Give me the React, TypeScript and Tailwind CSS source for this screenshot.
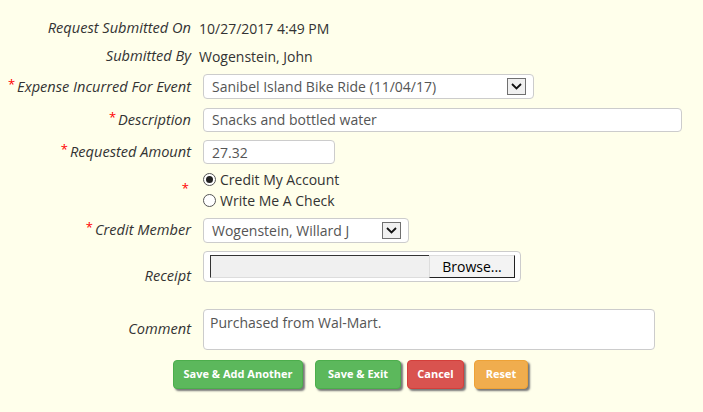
import React from "react";

const font = { fontFamily: '"Open Sans", "Noto Sans", sans-serif' };

function Label({ children, req }: { children?: React.ReactNode; req?: boolean }) {
  return (
    <div className="flex items-center justify-end pr-[8px] italic text-[14.6px] text-[#333]">
      {req && <span className="text-[#f00] not-italic mr-[2px] text-[13px] relative top-[-2px]">*</span>}
      {children}
    </div>
  );
}

function Chevron() {
  return (
    <div className="w-[19px] h-[17px] border border-[#707070] bg-[#f0f0f0] flex items-center justify-center">
      <svg width="11" height="7" viewBox="0 0 11 7">
        <path d="M1 1 L5.5 5.5 L10 1" fill="none" stroke="#111" strokeWidth="1.8" />
      </svg>
    </div>
  );
}

function Radio({ checked }: { checked?: boolean }) {
  return (
    <div className="w-[13px] h-[13px] rounded-full border border-[#555] bg-white flex items-center justify-center">
      {checked && <div className="w-[7px] h-[7px] rounded-full bg-[#222]" />}
    </div>
  );
}

function Btn({ children, cls }: { children: React.ReactNode; cls: string }) {
  return (
    <button
      className={`h-[29px] rounded-[4px] border text-white font-bold text-[11px] shadow-[2px_2px_2px_#777] ${cls}`}
    >
      {children}
    </button>
  );
}

export default function App() {
  return (
    <div className="w-[703px] h-[412px] bg-[#ffffeb] text-[14px] text-[#333]" style={font}>
      <div className="grid grid-cols-[199px_1fr] pt-[14px]">
        <Label>Request Submitted On</Label>
        <div className="h-[28px] flex items-center">10/27/2017 4:49 PM</div>

        <Label>Submitted By</Label>
        <div className="h-[28px] flex items-center">Wogenstein, John</div>

        <Label req>Expense Incurred For Event</Label>
        <div className="h-[33px] flex items-center pl-[4px]">
          <div className="w-[331px] h-[25px] rounded-[4px] border border-[#ccc] bg-white flex items-center justify-between pl-[8px] pr-[7px] text-[#555]">
            <span>Sanibel Island Bike Ride (11/04/17)</span>
            <Chevron />
          </div>
        </div>

        <Label req>Description</Label>
        <div className="h-[33px] flex items-center pl-[4px]">
          <div className="w-[479px] h-[24px] rounded-[4px] border border-[#ccc] bg-white flex items-center pl-[8px] text-[#555]">
            Snacks and bottled water
          </div>
        </div>

        <Label req>Requested Amount</Label>
        <div className="h-[32px] flex items-center pl-[4px]">
          <div className="w-[132px] h-[24px] rounded-[4px] border border-[#ccc] bg-white flex items-center pl-[8px] text-[#555]">
            27.32
          </div>
        </div>

        <Label req></Label>
        <div className="flex flex-col pl-[4px] pt-[1px] pb-[2px]">
          <div className="h-[21px] flex items-center gap-[4px]">
            <Radio checked />
            <span>Credit My Account</span>
          </div>
          <div className="h-[21px] flex items-center gap-[4px]">
            <Radio />
            <span>Write Me A Check</span>
          </div>
        </div>

        <Label req>Credit Member</Label>
        <div className="h-[34px] flex items-center pl-[4px]">
          <div className="w-[206px] h-[25px] rounded-[4px] border border-[#ccc] bg-white flex items-center justify-between pl-[8px] pr-[7px] text-[#555]">
            <span>Wogenstein, Willard J</span>
            <Chevron />
          </div>
        </div>

        <Label>Receipt</Label>
        <div className="h-[58px] pl-[4px] pt-[4px]">
          <div className="w-[318px] h-[31px] rounded-[4px] border border-[#ccc] bg-white flex items-center pl-[6px] pr-[5px]">
            <div className="w-[219px] h-[23px] bg-[#f0f0f0] border-t border-l border-t-[#333] border-l-[#333] border-b border-b-[#ddd]" />
            <div className="w-[86px] h-[23px] bg-[#f3f3f3] border-b border-r border-b-[#222] border-r-[#222] border-t border-l border-t-[#ddd] border-l-[#ddd] flex items-center justify-center text-[14px] text-black">
              Browse...
            </div>
          </div>
        </div>

        <Label>Comment</Label>
        <div className="h-[48px] pl-[4px] pt-[4px]">
          <div className="w-[452px] h-[41px] rounded-[4px] border border-[#ccc] bg-white pl-[6px] pt-[2px] text-[#555]">
            Purchased from Wal-Mart.
          </div>
        </div>
      </div>
      <div className="flex pl-[173px] pt-[7px]">
        <Btn cls="w-[130px] bg-[#5cb85c] border-[#4cae4c]">Save &amp; Add Another</Btn>
        <Btn cls="ml-[12px] w-[86px] bg-[#5cb85c] border-[#4cae4c]">Save &amp; Exit</Btn>
        <Btn cls="ml-[6px] w-[57px] bg-[#d9534f] border-[#d43f3a]">Cancel</Btn>
        <Btn cls="ml-[10px] w-[54px] bg-[#f0ad4e] border-[#eea236]">Reset</Btn>
      </div>
    </div>
  );
}
